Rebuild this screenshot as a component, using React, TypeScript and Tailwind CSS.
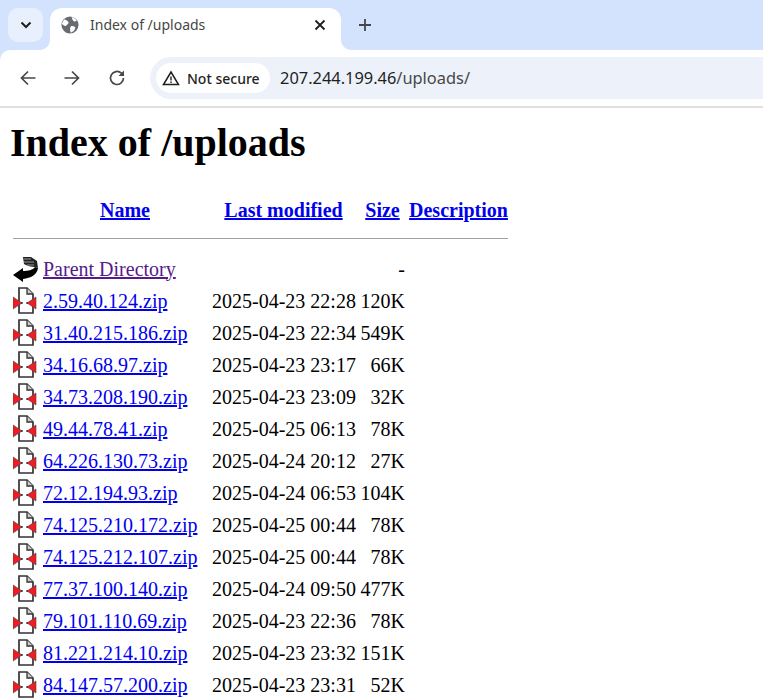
import React from "react";

const files = [
  ["2.59.40.124.zip", "2025-04-23 22:28", "120K"],
  ["31.40.215.186.zip", "2025-04-23 22:34", "549K"],
  ["34.16.68.97.zip", "2025-04-23 23:17", "66K"],
  ["34.73.208.190.zip", "2025-04-23 23:09", "32K"],
  ["49.44.78.41.zip", "2025-04-25 06:13", "78K"],
  ["64.226.130.73.zip", "2025-04-24 20:12", "27K"],
  ["72.12.194.93.zip", "2025-04-24 06:53", "104K"],
  ["74.125.210.172.zip", "2025-04-25 00:44", "78K"],
  ["74.125.212.107.zip", "2025-04-25 00:44", "78K"],
  ["77.37.100.140.zip", "2025-04-24 09:50", "477K"],
  ["79.101.110.69.zip", "2025-04-23 22:36", "78K"],
  ["81.221.214.10.zip", "2025-04-23 23:32", "151K"],
  ["84.147.57.200.zip", "2025-04-23 23:31", "52K"],
];

// apache compressed.gif
const ZipIcon = () => (
  <svg width="25" height="28" viewBox="1 0 25 28" className="block">
    <path d="M7 1h8l6 6v19H7z" fill="#fff" stroke="#333" strokeWidth="1.700" />
    <path d="M15 1v6h6" fill="#ccc" stroke="#333" strokeWidth="1.300" />
    <path d="M1 10v12l9-6z" fill="#f01c24" stroke="#444" strokeWidth=".6" />
    <path d="M24 10v12l-9-6z" fill="#f01c24" stroke="#444" strokeWidth=".6" />
    <path d="M9 16h2M14 16h2" stroke="#000" strokeWidth="1.200" />
  </svg>
);

// apache back.gif
const BackIcon = () => (
  <svg width="25" height="28" viewBox="0 0 25 28" className="block">
    <path d="M0 20l10-7v3c5 0 10-1 12-4l3 1c-1 7-7 10-15 11v3z" fill="#000" />
    <path d="M10 2h8l6 4 1 7-3-1c-4 0-8-1-11-3z" fill="#222" />
    <path d="M11 4h7M11 7h10M14 10h7" stroke="#999" strokeWidth="1" />
  </svg>
);

export default function App() {
  return (
    <div className="min-h-[700px] bg-white font-['Liberation_Serif',serif] text-black overflow-hidden">
      <div className="bg-[#d3e3fd]">
        <div className="h-[50px] flex items-start pl-2 pt-2 font-['Noto_Sans',sans-serif]">
          <div className="w-[35px] h-[34px] rounded-[10px] bg-[#e9f0fd] flex items-center justify-center">
            <svg width="12" height="8" viewBox="0 0 12 8">
              <path d="M1.500 1.500L6 6l4.500-4.500" fill="none" stroke="#1f1f1f" strokeWidth="2" />
            </svg>
          </div>
          <div className="relative ml-[7px] w-[291px] h-[42px] bg-white rounded-t-[12px] flex items-center pl-[11px] pr-[14px] pb-[9px] pt-[1px]">
            <div className="absolute -left-[10px] bottom-0 w-[10px] h-[10px] bg-white">
              <div className="w-full h-full bg-[#d3e3fd] rounded-br-[10px]" />
            </div>
            <div className="absolute -right-[10px] bottom-0 w-[10px] h-[10px] bg-white">
              <div className="w-full h-full bg-[#d3e3fd] rounded-bl-[10px]" />
            </div>
            <svg width="18" height="18" viewBox="0 0 20 20">
              <circle cx="10" cy="10" r="9.500" fill="#686b70" />
              <path d="M3.500 4c2 .5 3.500 1 4.500 2.500 1 1 0 2.500-1 3-1 .5-1 2-2.500 1.500C3 10.500 1.500 9.500 1 8zM11 11.500c2-1 4 0 5 1.500l-1.500 3.500L11 18.500c-1-2-1.500-5 0-7zM12 1.500c2 0 4.500 2 5.500 4l-3 .5c-1-.5-2.500-2.500-2.500-4.500z" fill="#fff" />
            </svg>
            <span className="ml-[11px] text-[14px] leading-[20px] text-[#444746] flex-1 whitespace-nowrap">Index of /uploads</span>
            <svg width="12" height="12" viewBox="0 0 12 12" className="-translate-x-px">
              <path d="M1.500 1.500l9 9M10.500 1.500l-9 9" stroke="#1f1f1f" strokeWidth="1.800" />
            </svg>
          </div>
          <svg width="14" height="14" viewBox="0 0 14 14" className="ml-[17px] mt-[10px]">
            <path d="M7 1v12M1 7h12" stroke="#444746" strokeWidth="1.800" />
          </svg>
        </div>
        <div className="h-[58px] bg-white border-b-2 border-[#e0e0e0] rounded-tl-[10px] flex items-center font-['Noto_Sans',sans-serif]">
          <div className="flex items-center pl-[20px]">
            <svg width="16" height="16" viewBox="0 0 16 16">
              <path d="M15.500 8H1.500M8 1.500L1.500 8 8 14.500" fill="none" stroke="#474747" strokeWidth="1.700" />
            </svg>
            <svg width="16" height="16" viewBox="0 0 16 16" className="ml-[28px]">
              <path d="M.5 8h14M8 1.500L14.500 8 8 14.500" fill="none" stroke="#474747" strokeWidth="1.700" />
            </svg>
            <svg width="18" height="18" viewBox="0 0 18 18" className="ml-[28px]">
              <path d="M15.500 9A6.500 6.500 0 1 1 13.400 4.200L15.500 6.300" fill="none" stroke="#474747" strokeWidth="1.700" />
              <path d="M16 1.500V7h-5.500z" fill="#474747" />
            </svg>
          </div>
          <div className="ml-[24px] flex-1 h-[42px] bg-[#edf2fa] rounded-l-[21px] flex items-center pl-[6px]">
            <div className="h-[30px] w-[114px] bg-white rounded-[15px] flex items-center pl-[6px]">
              <svg width="18" height="16" viewBox="0 0 18 16">
                <path d="M9 2L1.500 14.500h15z" fill="none" stroke="#1f1f1f" strokeWidth="1.500" />
                <path d="M9 6.500v4M9 11.500v1.500" stroke="#1f1f1f" strokeWidth="1.400" />
              </svg>
              <span className="ml-[7px] text-[14px] font-medium text-[#1f1f1f] whitespace-nowrap">Not secure</span>
            </div>
            <span className="ml-[10px] pt-[1px] text-[16.400px] text-[#1f1f1f]">
              207.244.199.46<span className="text-[#474747]">/uploads/</span>
            </span>
          </div>
        </div>
      </div>

      <div className="px-[10px] text-[20px] leading-[23px]">
        <h1 className="text-[40px] leading-[46px] font-bold mt-[12px] mb-[31px]">Index of /uploads</h1>
        <table className="ml-[1px] w-[499px] table-fixed border-separate border-spacing-[2px]">
          <thead>
            <tr>
              <th className="w-[28px] p-0"></th>
              <th className="w-[164px] p-0 font-bold"><a href="#" className="text-[#0000ee] underline">Name</a></th>
              <th className="w-[149px] p-0 font-bold"><a href="#" className="text-[#0000ee] underline">Last modified</a></th>
              <th className="w-[45px] p-0 font-bold"><a href="#" className="text-[#0000ee] underline">Size</a></th>
              <th className="w-[101px] p-0 pl-[2px] font-bold"><a href="#" className="text-[#0000ee] underline">Description</a></th>
            </tr>
            <tr>
              <th colSpan={5} className="p-0 pt-[14px] pb-[13px]"><div className="h-px bg-[#a0a0a0]" /></th>
            </tr>
          </thead>
          <tbody>
            <tr className="h-[30px]">
              <td className="p-0 align-middle"><BackIcon /></td>
              <td className="p-0 align-middle"><a href="#" className="text-[#551a8b] underline">Parent Directory</a></td>
              <td className="p-0"></td>
              <td className="p-0 text-right">-</td>
              <td className="p-0"></td>
            </tr>
            {files.map(([name, date, size]) => (
              <tr key={name} className="h-[30px]">
                <td className="p-0 align-middle"><ZipIcon /></td>
                <td className="p-0 align-middle whitespace-nowrap"><a href="#" className="text-[#0000ee] underline">{name}</a></td>
                <td className="p-0 pl-[3px] whitespace-nowrap">{date}</td>
                <td className="p-0 text-right">{size}</td>
                <td className="p-0"></td>
              </tr>
            ))}
          </tbody>
        </table>
      </div>
    </div>
  );
}
